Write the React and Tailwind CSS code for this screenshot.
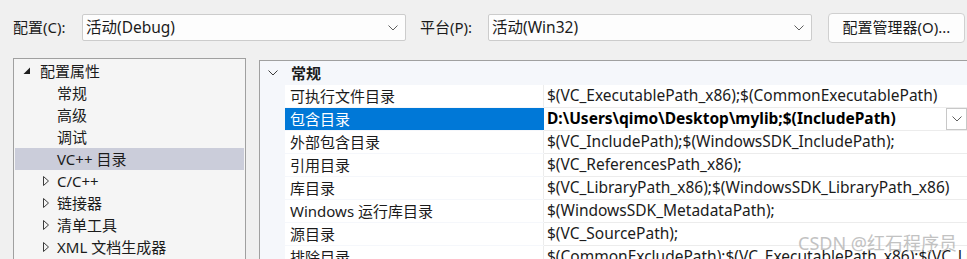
import React from "react";

const FONT = { fontFamily: '"Noto Sans", "Noto Sans CJK SC", sans-serif' };

function Chevron({ className = "", color = "#5f5f5f" }) {
  return (
    <svg width="10" height="6" viewBox="0 0 10 6" className={className}>
      <polyline points="0.5,0.5 5,5 9.5,0.5" fill="none" stroke={color} strokeWidth="1" />
    </svg>
  );
}

function Combo({ text }) {
  return (
    <div className="flex items-center shrink-0 w-[324px] h-[27px] bg-[#fdfdfd] border border-[#cccccc] rounded-[2px] pl-[3px] pr-[7px]">
      <span className="flex-1 text-[15.5px] text-[#1b1b1b] leading-none">{text}</span>
      <Chevron />
    </div>
  );
}

const tree = [
  { label: "配置属性", kind: "open" },
  { label: "常规", kind: "leaf" },
  { label: "高级", kind: "leaf" },
  { label: "调试", kind: "leaf" },
  { label: "VC++ 目录", kind: "leaf", selected: true },
  { label: "C/C++", kind: "closed" },
  { label: "链接器", kind: "closed" },
  { label: "清单工具", kind: "closed" },
  { label: "XML 文档生成器", kind: "closed" },
];

const rows = [
  ["可执行文件目录", "$(VC_ExecutablePath_x86);$(CommonExecutablePath)"],
  ["包含目录", "D:\\Users\\qimo\\Desktop\\mylib;$(IncludePath)", true],
  ["外部包含目录", "$(VC_IncludePath);$(WindowsSDK_IncludePath);"],
  ["引用目录", "$(VC_ReferencesPath_x86);"],
  ["库目录", "$(VC_LibraryPath_x86);$(WindowsSDK_LibraryPath_x86)"],
  ["Windows 运行库目录", "$(WindowsSDK_MetadataPath);"],
  ["源目录", "$(VC_SourcePath);"],
  ["排除目录", "$(CommonExcludePath);$(VC_ExecutablePath_x86);$(VC_LibraryPath_x86)"],
];

export default function App() {
  return (
    <div
      className="relative w-[967px] h-[259px] bg-[#f0f0f0] overflow-hidden text-[#1b1b1b]"
      style={FONT}
    >
      {/* top bar */}
      <div className="flex items-center h-[55px] pl-[13px]">
        <div className="w-[69px] shrink-0 text-[15px]">配置(C):</div>
        <Combo text="活动(Debug)" />
        <div className="ml-[14px] w-[68px] shrink-0 text-[15px]">平台(P):</div>
        <Combo text="活动(Win32)" />
        <div className="ml-[16px] w-[137px] shrink-0 h-[30px] flex items-center justify-center bg-[#fdfdfd] border border-[#d0d0d0] rounded-[4px] text-[15px]">
          配置管理器(O)...
        </div>
      </div>

      {/* main */}
      <div className="flex">
        {/* tree */}
        <div className="ml-[13px] mt-[3px] w-[233px] shrink-0 h-[210px] border border-[#a0a0a0] bg-[#f5f5f5] pt-[1px] px-[1px]">
          {tree.map((t, i) => (
            <div
              key={i}
              className={`flex items-center h-[22px] text-[15px] whitespace-nowrap ${t.selected ? "bg-[#cbcdda]" : ""}`}
            >
              {t.kind === "open" && (
                <>
                  <svg width="8" height="8" viewBox="0 0 8 8" className="ml-[8px] mr-[9px] shrink-0">
                    <polygon points="7,0.5 7,7 0.5,7" fill="#1e1e1e" />
                  </svg>
                  <span>{t.label}</span>
                </>
              )}
              {t.kind === "leaf" && <span className="ml-[42px]">{t.label}</span>}
              {t.kind === "closed" && (
                <>
                  <svg width="6" height="10" viewBox="0 0 6 10" className="ml-[28px] mr-[8px] shrink-0">
                    <polygon points="0.5,0.5 5.5,5 0.5,9.5" fill="none" stroke="#3c3c3c" strokeWidth="1" />
                  </svg>
                  <span>{t.label}</span>
                </>
              )}
            </div>
          ))}
        </div>

        {/* grid */}
        <div className="ml-[13px] mt-[5px] flex-1 min-w-0 border-t border-l border-[#a0a0a0] bg-[#f5f7fb]">
          <div className="flex items-center h-[24px]">
            <div className="w-[25px] flex justify-center">
              <Chevron color="#3c3c3c" />
            </div>
            <span className="ml-[6px] text-[15px] font-bold">常规</span>
          </div>
          {rows.map(([name, value, sel], i) => (
            <div key={i} className="flex h-[23px] pl-[25px]">
              <div
                className={`w-[259px] shrink-0 h-[22px] flex items-center pl-[5px] text-[15px] whitespace-nowrap border-r ${
                  sel ? "bg-[#0078d7] text-white border-[#0078d7]" : "bg-white border-[#ececec]"
                }`}
              >
                {name}
              </div>
              <div className="flex-1 min-w-0 flex flex-col">
                <div
                  className={`h-[22px] flex items-center bg-white pl-[3px] text-[15.5px] whitespace-nowrap overflow-hidden ${
                    sel ? "font-bold text-black" : ""
                  }`}
                >
                  <span className="flex-1 min-w-0 overflow-hidden">{value}</span>
                  {sel && (
                    <div className="w-[21px] h-[22px] border border-[#c8c8c8] bg-white flex items-center justify-center shrink-0">
                      <Chevron />
                    </div>
                  )}
                </div>
                <div className="h-[1px] bg-[#ececec]" />
              </div>
            </div>
          ))}
        </div>
      </div>

      {/* watermark */}
      <div
        className="absolute left-[798px] top-[230px] text-[18px] text-[#b4b4b4] opacity-80 whitespace-nowrap"
        style={FONT}
      >
        CSDN @红石程序员
      </div>
    </div>
  );
}
